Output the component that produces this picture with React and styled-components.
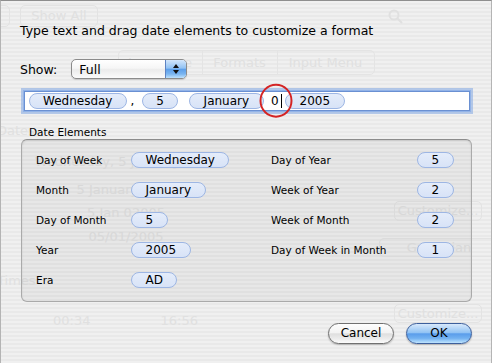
import React from 'react'
import styled, { createGlobalStyle } from 'styled-components'

const GlobalStyle = createGlobalStyle`
  html, body {
    margin: 0;
    padding: 0;
  }
  body {
    width: 492px;
    height: 363px;
    overflow: hidden;
    font-family: "DejaVu Sans", "Liberation Sans", sans-serif;
    color: #000;
  }
`

const Page = styled.div`
  position: relative;
  width: 492px;
  height: 363px;
  box-sizing: border-box;
  overflow: hidden;
  border-top: 1px solid #8e8e8e;
  border-left: 1px solid #b4b4b4;
  border-right: 1px solid #b4b4b4;
  background: repeating-linear-gradient(
    to bottom,
    #f0f0f0 0px,
    #f0f0f0 2px,
    #e9e9e9 2px,
    #e9e9e9 4px
  );
`

/* the preferences window seen faintly through the translucent sheet */
const BackWindow = styled.div`
  display: flex;
  flex-direction: column;
  color: #e0e0e0;
  font-size: 13px;
  line-height: 16px;
`

const Toolbar = styled.div`
  display: flex;
  align-items: center;
  height: 22px;
  margin-top: 4px;
`

const GhostButton = styled.div`
  flex-shrink: 0;
  width: ${p => p.$width}px;
  height: ${p => p.$height || 22}px;
  margin-left: ${p => p.$offset || 0}px;
  margin-top: ${p => p.$top || 0}px;
  box-sizing: border-box;
  display: flex;
  align-items: center;
  justify-content: center;
  border: 1px solid #e3e3e3;
  border-radius: 5px;
  white-space: nowrap;
`

const Search = styled.div`
  margin: 0 88px 0 auto;
  display: flex;
`

const Tabs = styled.div`
  display: flex;
  align-self: center;
  margin-top: 23px;
  height: 23px;
  border: 1px solid #e4e4e4;
  border-radius: 5px;
`

const Tab = styled.div`
  width: ${p => p.$width}px;
  display: flex;
  align-items: center;
  justify-content: center;
  border-left: ${p => (p.$first ? 'none' : '1px solid #e4e4e4')};
`

const BackBody = styled.div`
  display: flex;
`

const BackLeft = styled.div`
  flex-shrink: 0;
  width: 250px;
  display: flex;
  flex-direction: column;
`

const BackHeading = styled.div`
  margin: ${p => p.$top}px 0 0 -4px;
`

const BackLine = styled.div`
  margin-top: ${p => p.$top}px;
  text-align: center;
  white-space: nowrap;
`

const TimesRow = styled.div`
  display: flex;
  gap: 70px;
  margin: 24px 0 0 52px;
`

const BackRight = styled.div`
  flex-shrink: 0;
  display: flex;
  flex-direction: column;
  margin-left: 140px;
`

const Sheet = styled.div`
  position: absolute;
  inset: 0;
  padding: 22px 19px 0 19px;
  display: flex;
  flex-direction: column;
`

const Title = styled.div`
  font-size: 12.5px;
  line-height: 16px;
  white-space: nowrap;
`

const ShowRow = styled.div`
  display: flex;
  align-items: center;
  height: 20px;
  margin-top: 20px;
  gap: 14px;
  font-size: 12.5px;
`

const Popup = styled.div`
  width: 116px;
  height: 20px;
  box-sizing: border-box;
  display: flex;
  align-items: center;
  border: 1px solid #8b8b8b;
  border-radius: 5px;
  overflow: hidden;
  background: linear-gradient(to bottom, #ffffff 0%, #f6f6f6 45%, #ebebeb 55%, #fbfbfb 100%);
  box-shadow: 0 1px 1px rgba(0, 0, 0, 0.15);
`

const PopupText = styled.span`
  padding-left: 7px;
  flex: 1;
`

const Stepper = styled.div`
  width: 20px;
  height: 100%;
  display: flex;
  align-items: center;
  justify-content: center;
  border-left: 1px solid #5d82c2;
  background: linear-gradient(to bottom, #d3e6fb 0%, #92c2f3 45%, #5d9fea 52%, #7ab5f0 78%, #bfe2fd 100%);
`

const Field = styled.div`
  height: 20px;
  margin: 12px 2px 0 4px;
  box-sizing: border-box;
  display: flex;
  align-items: center;
  background: #fff;
  border: 1px solid #6a90d2;
  box-shadow: 0 0 0 1px #92b3e8, 0 0 0 3px rgba(130, 168, 228, 0.55);
  font-size: 12px;
  white-space: pre;
`

const Token = styled.span`
  display: inline-flex;
  align-items: center;
  justify-content: center;
  height: 16px;
  box-sizing: border-box;
  padding: 0 13.5px;
  margin: ${p => (p.$inline ? '0 3.5px' : '0')};
  border: 1px solid #9db6e4;
  border-radius: 8px;
  background: linear-gradient(to bottom, #e4ecfa 0%, #d8e3f7 100%);
  font-size: 12px;
  line-height: 14px;
  white-space: nowrap;
`

const Sep = styled.span`
  font-size: 12px;
`

const Caret = styled.span`
  position: relative;
  display: inline-flex;
  align-items: center;
`

const Cursor = styled.span`
  display: inline-block;
  width: 1px;
  height: 14px;
  margin-left: 2px;
  background: #000;
`

const Highlight = styled.span`
  position: absolute;
  left: 50%;
  top: 50%;
  width: 29px;
  height: 30px;
  transform: translate(-50%, -51%);
  border: 2px solid #d42424;
  border-radius: 50%;
  pointer-events: none;
`

const GroupLabel = styled.div`
  margin: 15px 0 0 9px;
  font-size: 10.5px;
  line-height: 13px;
`

const GroupBox = styled.div`
  height: 163px;
  margin-left: 1px;
  box-sizing: border-box;
  padding: 12px 0 0 14px;
  display: flex;
  border: 1px solid #aaaaaa;
  border-top-color: #8c8c8c;
  border-radius: 6px;
  background: rgba(0, 0, 0, 0.035);
  box-shadow: inset 0 1px 2px rgba(0, 0, 0, 0.12);
`

const Column = styled.div`
  width: ${p => p.$width}px;
  display: flex;
  flex-direction: column;
  gap: 14px;
`

const Row = styled.div`
  display: grid;
  grid-template-columns: ${p => p.$labelWidth}px auto;
  justify-items: start;
  align-items: center;
  height: 16px;
  font-size: 10.5px;
`

const ButtonBar = styled.div`
  display: flex;
  justify-content: flex-end;
  gap: 12px;
  margin-top: 21px;
`

const AquaButton = styled.button`
  width: 66px;
  height: 21px;
  box-sizing: border-box;
  padding: 0;
  border-radius: 11px;
  font-family: inherit;
  font-size: 12px;
  line-height: 19px;
  color: #000;
  border: 1px solid ${p => (p.$primary ? '#3d5f9c' : '#707070')};
  background: ${p =>
    p.$primary
      ? 'linear-gradient(to bottom, #d8e9fb 0%, #92c3f4 45%, #5a9deb 52%, #72b1f1 75%, #bfe4fe 100%)'
      : 'linear-gradient(to bottom, #fefefe 0%, #f3f3f3 45%, #dfdfdf 52%, #ececec 78%, #fbfbfb 100%)'};
  box-shadow: 0 1px 1.5px rgba(0, 0, 0, 0.25);
`

const left = [
  ['Day of Week', 'Wednesday'],
  ['Month', 'January'],
  ['Day of Month', '5'],
  ['Year', '2005'],
  ['Era', 'AD'],
]

const right = [
  ['Day of Year', '5'],
  ['Week of Year', '2'],
  ['Week of Month', '2'],
  ['Day of Week in Month', '1'],
]

const Arrows = () => (
  <svg width="8" height="12" viewBox="0 0 8 12">
    <path d="M4 1 L7 5 L1 5 Z" fill="#111" />
    <path d="M4 11 L7 7 L1 7 Z" fill="#111" />
  </svg>
)

const Magnifier = () => (
  <svg width="15" height="15" viewBox="0 0 15 15" fill="none" stroke="#e0e0e0" strokeWidth="2">
    <circle cx="6" cy="6" r="4.5" />
    <path d="M9.5 9.5 L13.5 13.5" strokeLinecap="round" />
  </svg>
)

export default function App() {
  return (
    <>
      <GlobalStyle />
      <Page>
        <BackWindow>
          <Toolbar>
            <GhostButton $width={19} $offset={-10} />
            <GhostButton $width={78} $offset={10}>Show All</GhostButton>
            <Search><Magnifier /></Search>
          </Toolbar>
          <Tabs>
            <Tab $width={83} $first>Language</Tab>
            <Tab $width={74}>Formats</Tab>
            <Tab $width={96}>Input Menu</Tab>
          </Tabs>
          <BackBody>
            <BackLeft>
              <BackHeading $top={48}>Dates</BackHeading>
              <BackLine $top={15}>Wednesday, 5 January 2005</BackLine>
              <BackLine $top={12}>5 January 2005</BackLine>
              <BackLine $top={7}>5 Jan 02005</BackLine>
              <BackLine $top={8}>05/01/2005</BackLine>
              <BackHeading $top={28}>Times</BackHeading>
              <TimesRow>
                <span>00:34</span>
                <span>16:56</span>
              </TimesRow>
            </BackLeft>
            <BackRight>
              <GhostButton $width={88} $height={20} $offset={3} $top={126}>Customize...</GhostButton>
              <GhostButton $width={120} $height={19} $offset={-12} $top={17}>Gregorian</GhostButton>
              <GhostButton $width={88} $height={19} $offset={3} $top={47}>Customize...</GhostButton>
            </BackRight>
          </BackBody>
        </BackWindow>
        <Sheet>
          <Title>Type text and drag date elements to customize a format</Title>
          <ShowRow>
            <span>Show:</span>
            <Popup>
              <PopupText>Full</PopupText>
              <Stepper><Arrows /></Stepper>
            </Popup>
          </ShowRow>
          <Field>
            <Token $inline>Wednesday</Token>
            <Sep>, </Sep>
            <Token $inline>5</Token>
            <Sep> </Sep>
            <Token $inline>January</Token>
            <Sep> </Sep>
            <Caret>
              0<Cursor />
              <Highlight />
            </Caret>
            <Token $inline>2005</Token>
          </Field>
          <GroupLabel>Date Elements</GroupLabel>
          <GroupBox>
            <Column $width={235}>
              {left.map(([label, value]) => (
                <Row key={label} $labelWidth={95}>
                  <span>{label}</span>
                  <Token>{value}</Token>
                </Row>
              ))}
            </Column>
            <Column $width={182}>
              {right.map(([label, value]) => (
                <Row key={label} $labelWidth={146}>
                  <span>{label}</span>
                  <Token>{value}</Token>
                </Row>
              ))}
            </Column>
          </GroupBox>
          <ButtonBar>
            <AquaButton>Cancel</AquaButton>
            <AquaButton $primary>OK</AquaButton>
          </ButtonBar>
        </Sheet>
      </Page>
    </>
  )
}
